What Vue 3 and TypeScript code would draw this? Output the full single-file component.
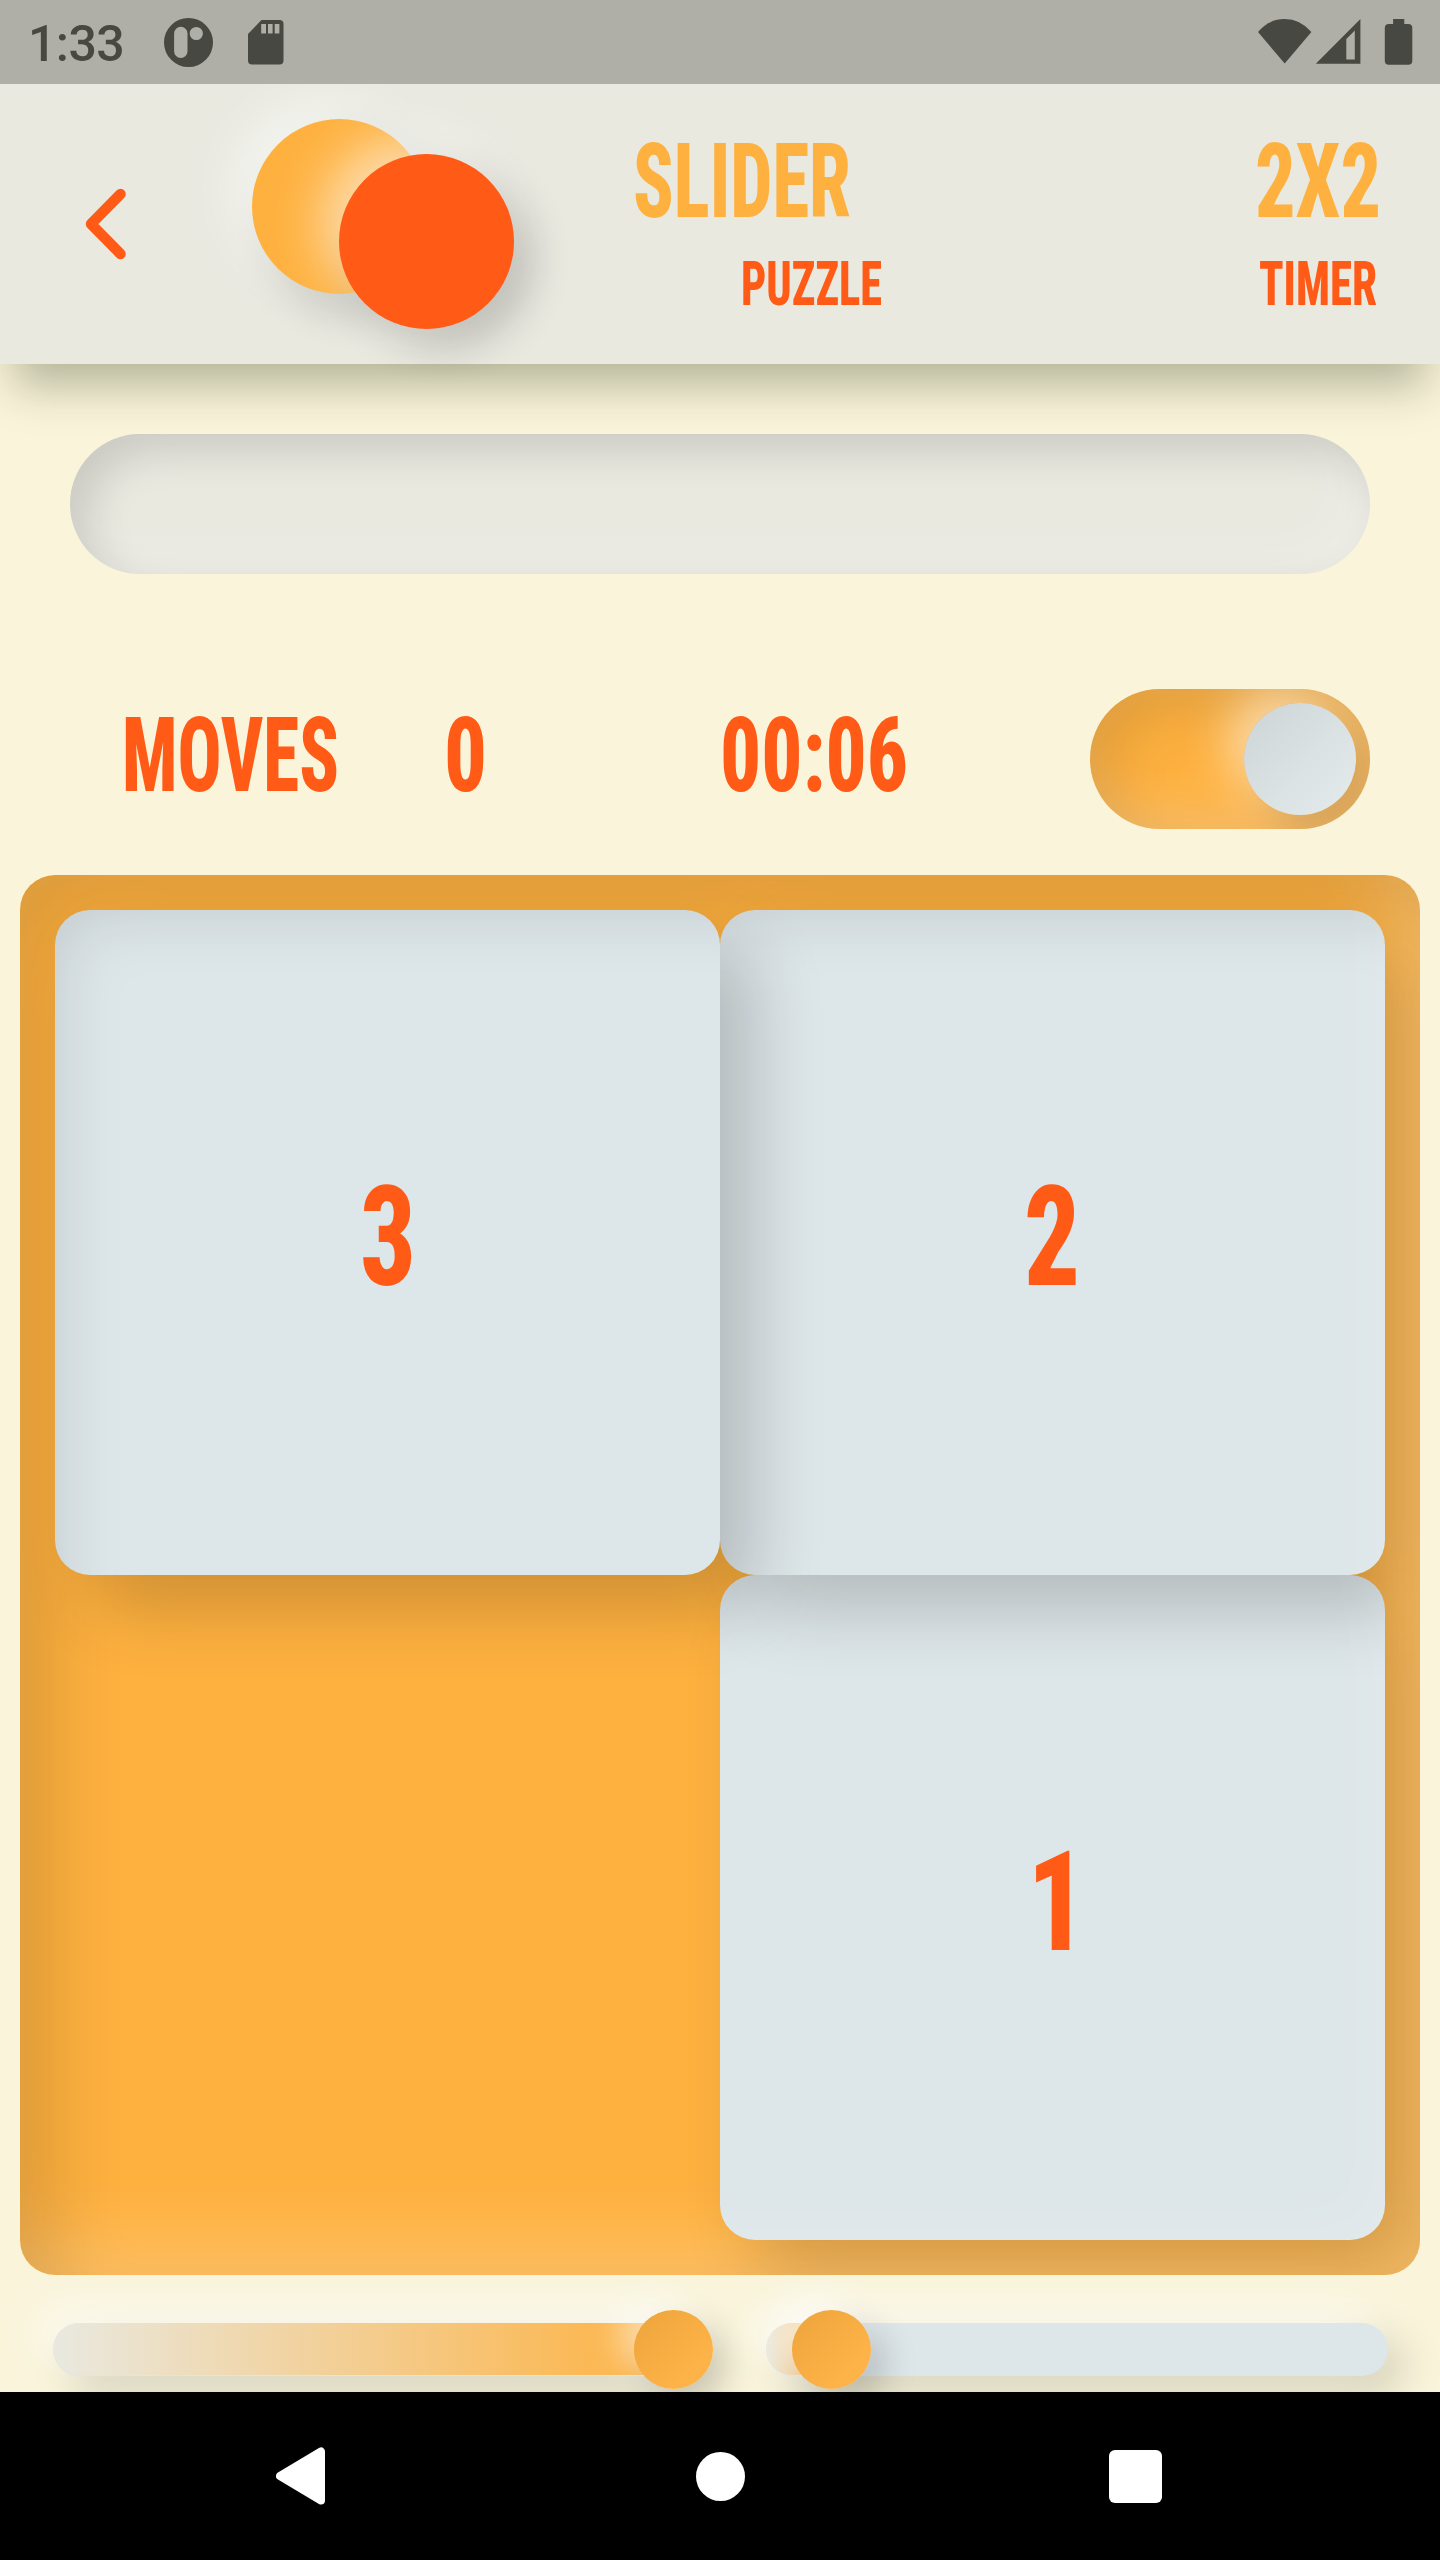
<script setup lang="ts">
interface Label {
  text: string
  width: number
  cap: number
  x: number
  length: number
}

interface Tile extends Label {
  column: number
  row: number
}

const slider: Label = { text: 'SLIDER', width: 214, cap: 74, x: -3, length: 218 }
const puzzle: Label = { text: 'PUZZLE', width: 137, cap: 44, x: -3, length: 141 }
const size: Label = { text: '2X2', width: 120, cap: 74, x: -3, length: 126 }
const timer: Label = { text: 'TIMER', width: 116, cap: 44, x: -1, length: 118 }
const movesLabel: Label = { text: 'MOVES', width: 209, cap: 74, x: -5, length: 217 }
const moves: Label = { text: '0', width: 35, cap: 74, x: -4, length: 43 }
const clock: Label = { text: '00:06', width: 181, cap: 74, x: -4, length: 188 }

const tiles: Tile[] = [
  { text: '3', width: 46, cap: 99, x: -5, length: 56, column: 1, row: 1 },
  { text: '2', width: 46, cap: 99, x: -6, length: 56, column: 2, row: 1 },
  { text: '1', width: 33, cap: 99, x: -9, length: 60, column: 2, row: 2 },
]
</script>

<template>
  <div class="screen">
    <div class="status">
      <span class="time">1:33</span>
      <svg class="app-icon" width="49" height="49" viewBox="0 0 49 49">
        <path fill-rule="evenodd" d="M24.5 0a24.5 24.5 0 1 0 0 49a24.5 24.5 0 0 0 0-49zM16.8 8.7a6.7 6.7 0 0 1 6.7 6.7v17.900a6.700 6.700 0 0 1-13.400 0v-17.900a6.700 6.700 0 0 1 6.700-6.700zM32.300 8.900a6.600 6.600 0 1 1 0 13.200a6.600 6.600 0 0 1 0-13.200z" />
      </svg>
      <svg class="sd-icon" width="36" height="45" viewBox="0 0 36 45">
        <path fill-rule="evenodd" d="M13.500 0h18q4 0 4 4v36.500q0 4-4 4h-27.500q-4 0-4-4v-26.500zM13.200 4v9.600h4.800v-9.600zM20 4v9.600h4.600v-9.600zM26.700 4v9.600h4.700v-9.600z" />
      </svg>
      <svg class="signals" width="156" height="48" viewBox="0 0 156 48">
        <path d="M0 14Q11 1 26.700 1T53.400 14L26.700 45.500z" />
        <path fill-rule="evenodd" d="M102.400 1v44.800H57.800zM96.800 12.500L88.300 21v20.500h8.500z" />
        <path d="M135.100 1h11.200v5h4q4 0 4 4v33q0 3.700-4 3.700h-19.500q-4 0-4-3.700v-33q0-4 4-4h4.300z" />
      </svg>
    </div>

    <header class="header">
      <svg class="back" width="42" height="72" viewBox="0 0 42 72">
        <path d="M35.500 6L6 36L35.500 66" />
      </svg>
      <div class="logo">
        <span class="disc yellow"></span>
        <span class="disc orange"></span>
      </div>
      <div class="titles">
        <svg class="type gold" :width="slider.width" :height="slider.cap">
          <text :x="slider.x" :y="slider.cap" :textLength="slider.length" lengthAdjust="spacingAndGlyphs">{{ slider.text }}</text>
        </svg>
        <svg class="type small sub" :width="puzzle.width" :height="puzzle.cap">
          <text :x="puzzle.x" :y="puzzle.cap" :textLength="puzzle.length" lengthAdjust="spacingAndGlyphs">{{ puzzle.text }}</text>
        </svg>
      </div>
      <div class="mode">
        <svg class="type gold" :width="size.width" :height="size.cap">
          <text :x="size.x" :y="size.cap" :textLength="size.length" lengthAdjust="spacingAndGlyphs">{{ size.text }}</text>
        </svg>
        <svg class="type small" :width="timer.width" :height="timer.cap">
          <text :x="timer.x" :y="timer.cap" :textLength="timer.length" lengthAdjust="spacingAndGlyphs">{{ timer.text }}</text>
        </svg>
      </div>
    </header>

    <main class="game">
      <div class="progress"></div>
      <div class="stats">
        <svg class="type" :width="movesLabel.width" :height="movesLabel.cap">
          <text :x="movesLabel.x" :y="movesLabel.cap" :textLength="movesLabel.length" lengthAdjust="spacingAndGlyphs">{{ movesLabel.text }}</text>
        </svg>
        <svg class="type count" :width="moves.width" :height="moves.cap">
          <text :x="moves.x" :y="moves.cap" :textLength="moves.length" lengthAdjust="spacingAndGlyphs">{{ moves.text }}</text>
        </svg>
        <svg class="type clock" :width="clock.width" :height="clock.cap">
          <text :x="clock.x" :y="clock.cap" :textLength="clock.length" lengthAdjust="spacingAndGlyphs">{{ clock.text }}</text>
        </svg>
        <div class="toggle"><span class="toggle-knob"></span></div>
      </div>

      <div class="board">
        <div
          v-for="(tile, i) in tiles"
          :key="tile.text"
          class="tile"
          :style="{ gridColumn: tile.column, gridRow: tile.row, zIndex: tiles.length - i }"
        >
          <svg class="type large" :width="tile.width" :height="tile.cap">
            <text :x="tile.x" :y="tile.cap" :textLength="tile.length" lengthAdjust="spacingAndGlyphs">{{ tile.text }}</text>
          </svg>
        </div>
      </div>

      <div class="sliders">
        <div class="track"><div class="fill full"></div><span class="knob"></span></div>
        <div class="track"><div class="fill low"></div><span class="knob"></span></div>
      </div>
    </main>

    <nav class="nav">
      <svg width="50" height="58" viewBox="0 0 50 58">
        <path d="M45 4.500V53.500L4 29z" fill="#fff" stroke="#fff" stroke-width="8" stroke-linejoin="round" />
      </svg>
      <span class="home"></span>
      <span class="recent"></span>
    </nav>
  </div>
</template>

<style>
body {
  margin: 0;
}
</style>

<style scoped>
.screen {
  display: flex;
  flex-direction: column;
  width: 1440px;
  height: 2560px;
  overflow: hidden;
  background: #f9f4da;
  font-family: Roboto, "Liberation Sans", sans-serif;
}
.screen svg {
  display: block;
  flex: none;
}
.status {
  display: flex;
  align-items: flex-start;
  box-sizing: border-box;
  height: 84px;
  flex: none;
  padding: 18px 26px 0 28px;
  background: #afafa7;
  color: #484842;
  position: relative;
  z-index: 3;
}
.status svg {
  fill: #484842;
}
.time {
  width: 136px;
  font-size: 50px;
  line-height: 52px;
  font-weight: 500;
  letter-spacing: -0.6px;
}
.sd-icon {
  margin: 2px 0 0 34.500px;
}
.signals {
  margin-left: auto;
}
.header {
  display: flex;
  align-items: flex-start;
  box-sizing: border-box;
  height: 280px;
  flex: none;
  padding-left: 85px;
  background: #e9e9e0;
  position: relative;
  z-index: 2;
  box-shadow: 0 35px 42px -14px rgba(50, 60, 30, 0.34);
}
.back {
  margin-top: 104px;
}
.back path {
  fill: none;
  stroke: #ff5a16;
  stroke-width: 10.500;
  stroke-linecap: round;
  stroke-linejoin: round;
}
.logo {
  display: flex;
  width: 262px;
  margin: 35px 0 0 124.500px;
}
.disc {
  flex: none;
  width: 175px;
  height: 175px;
  border-radius: 50%;
  box-shadow: -17px -17px 52px rgba(255, 255, 255, 0.6), 17px 17px 42px rgba(0, 0, 0, 0.2);
}
.yellow {
  background: #feb13f;
}
.orange {
  margin: 35px 0 0 -87.500px;
  background: #ff5a16;
}
.titles {
  width: 248px;
  margin: 59px 0 0 122.500px;
}
.sub {
  margin-left: 108px;
}
.mode {
  display: flex;
  flex-direction: column;
  align-items: center;
  margin: 59px 0 0 374px;
}
.type {
  overflow: visible;
  fill: #ff5a16;
  font-size: 104px;
  font-weight: 800;
  font-stretch: 75%;
}
.gold {
  fill: #feb13f;
}
.small {
  margin-top: 44px;
  font-size: 62px;
}
.large {
  font-size: 139px;
}
.game {
  flex: none;
  height: 2028px;
  overflow: hidden;
}
.progress {
  height: 140px;
  margin: 70px 70px 0;
  border-radius: 70px;
  background: #e9e9e0;
  box-shadow: inset 17px 17px 42px rgba(0, 0, 0, 0.135), inset -17px -17px 52px rgba(255, 255, 255, 0.22);
}
.stats {
  display: flex;
  align-items: flex-start;
  height: 186px;
  padding: 115px 70px 0 127px;
}
.stats .type {
  margin-top: 28px;
}
.stats .count {
  margin-left: 112px;
}
.stats .clock {
  margin-left: 241px;
}
.toggle {
  display: flex;
  align-items: center;
  justify-content: flex-end;
  box-sizing: border-box;
  width: 280px;
  height: 140px;
  margin-left: auto;
  padding-right: 14px;
  overflow: hidden;
  border-radius: 70px;
  background: #feb13f;
  box-shadow: inset 17px 17px 62px rgba(0, 0, 0, 0.13), inset -17px -17px 52px rgba(255, 255, 255, 0.25);
}
.toggle-knob {
  width: 112px;
  height: 112px;
  border-radius: 50%;
  background: linear-gradient(135deg, #d0d7d9 12%, #dae2e4 55%, #e0e8ea 85%);
  box-shadow: -17px -17px 48px rgba(255, 255, 255, 0.55), 17px 17px 35px rgba(0, 0, 0, 0.15);
}
.board {
  display: grid;
  grid-template-columns: 665px 665px;
  grid-template-rows: 665px 665px;
  box-sizing: border-box;
  width: 1400px;
  height: 1400px;
  margin-left: 20px;
  padding: 35px;
  position: relative;
  z-index: 0;
  overflow: hidden;
  border-radius: 35px;
  background: #feb13f;
}
/* Recessed edge shading that falls over both the board and its tiles */
.board::after {
  content: "";
  position: absolute;
  inset: 0;
  z-index: 9;
  border-radius: 35px;
  box-shadow: inset 35px 35px 70px rgba(0, 0, 0, 0.13), inset -35px -35px 70px rgba(255, 255, 255, 0.2);
}
.tile {
  display: flex;
  align-items: center;
  justify-content: center;
  box-sizing: border-box;
  padding-bottom: 15px;
  position: relative;
  border-radius: 35px;
  background: #dde6e9;
  box-shadow: 35px 35px 70px rgba(0, 0, 0, 0.185);
}
.sliders {
  display: flex;
  gap: 92px;
  padding: 48px 52.500px 0;
}
.track {
  display: flex;
  align-items: center;
  width: 621.500px;
  height: 52.700px;
  border-radius: 26.500px;
  background: #dde6e9;
  box-shadow: -17px -17px 42px rgba(255, 255, 255, 0.6), 17px 17px 42px rgba(0, 0, 0, 0.15);
}
.fill {
  flex: none;
  height: 52px;
  border-radius: 26px 0 0 26px;
  background: linear-gradient(90deg, #e9e9e0, #feb13f);
}
.full {
  width: 621px;
}
.low {
  width: 65.500px;
}
.knob {
  flex: none;
  width: 79px;
  height: 79px;
  margin-left: -39.500px;
  border-radius: 50%;
  background: linear-gradient(135deg, #f0a73d 15%, #feb348 75%);
  box-shadow: -14px -14px 36px rgba(255, 255, 255, 0.6), 14px 14px 34px rgba(0, 0, 0, 0.18);
}
.nav {
  display: flex;
  align-items: center;
  box-sizing: border-box;
  height: 168px;
  padding-left: 276px;
  background: #000;
}
.home {
  width: 49px;
  height: 49px;
  margin-left: 369.500px;
  border-radius: 50%;
  background: #fff;
}
.recent {
  width: 53px;
  height: 53px;
  margin-left: 364px;
  border-radius: 6px;
  background: #fff;
}
</style>
